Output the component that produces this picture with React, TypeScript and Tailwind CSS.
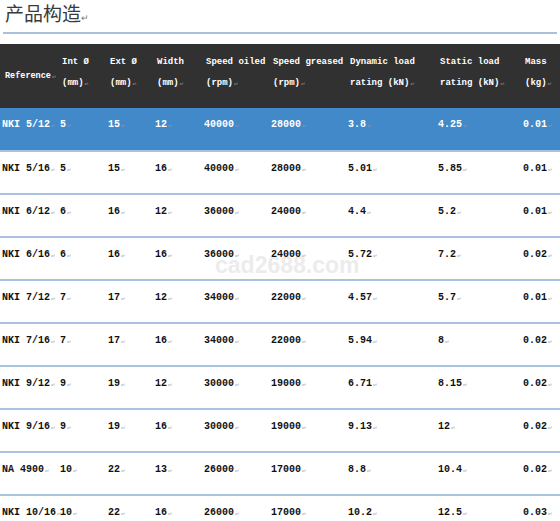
const cols = [
  "w-[58px]",
  "w-[48px]",
  "w-[47px]",
  "w-[49px]",
  "w-[67px]",
  "w-[77px]",
  "w-[90px]",
  "w-[85px]",
  "w-[60px]",
]

const header: [string, string][] = [
  ["", "Reference"],
  ["Int Ø", "(mm)"],
  ["Ext Ø", "(mm)"],
  ["Width", "(mm)"],
  ["Speed oiled", "(rpm)"],
  ["Speed greased", "(rpm)"],
  ["Dynamic load", "rating (kN)"],
  ["Static load", "rating (kN)"],
  ["Mass", "(kg)"],
]

const rows: string[][] = [
  ["NKI 5/12", "5", "15", "12", "40000", "28000", "3.8", "4.25", "0.01"],
  ["NKI 5/16", "5", "15", "16", "40000", "28000", "5.01", "5.85", "0.01"],
  ["NKI 6/12", "6", "16", "12", "36000", "24000", "4.4", "5.2", "0.01"],
  ["NKI 6/16", "6", "16", "16", "36000", "24000", "5.72", "7.2", "0.02"],
  ["NKI 7/12", "7", "17", "12", "34000", "22000", "4.57", "5.7", "0.01"],
  ["NKI 7/16", "7", "17", "16", "34000", "22000", "5.94", "8", "0.02"],
  ["NKI 9/12", "9", "19", "12", "30000", "19000", "6.71", "8.15", "0.02"],
  ["NKI 9/16", "9", "19", "16", "30000", "19000", "9.13", "12", "0.02"],
  ["NA 4900", "10", "22", "13", "26000", "17000", "8.8", "10.4", "0.02"],
  ["NKI 10/16", "10", "22", "16", "26000", "17000", "10.2", "12.5", "0.03"],
]

// little gray paragraph mark after each cell (copied from a Word doc)
const Mark = () => (
  <span className="ml-[1px] text-[6px] font-normal text-[#9a9a9a]">↵</span>
)

export default function App() {
  return (
    <div className="relative h-[521px] w-[560px] overflow-hidden bg-white">
      {/* watermark sits under the table */}
      <div className="pointer-events-none absolute left-[215px] top-[254px] font-['Liberation_Sans',sans-serif] text-[23px] font-bold leading-[22px] text-[#ececec]">
        cad2688.com
      </div>

      <div className="relative px-[5px] pt-[1px]">
        <h1 className="h-[24px] font-['Noto_Sans_CJK_SC',sans-serif] text-[19px] leading-[24px] text-[#3a3a3a]">
          产品构造<span className="text-[9px] text-[#777]">↵</span>
        </h1>
      </div>
      <div className="relative mx-[3px] mt-[7px] h-[2px] bg-[#a9bfdc]" />

      <table className="relative mt-[10px] w-[580px] table-fixed border-collapse font-['Liberation_Mono',monospace] font-bold">
        <thead>
          <tr className="h-[64px] bg-[#313131] text-[9px] text-white">
            {header.map(([a, b], i) => (
              <th key={i} className={`${cols[i]} p-0 pb-[6px] text-left align-middle font-bold`}>
                {a === "" ? (
                  <div className="pl-[5px] pt-[6px] text-[8.5px]">
                    {b}
                    <Mark />
                  </div>
                ) : (
                  <div className="whitespace-nowrap pl-[4px] leading-[21px]">
                    <div>{a}</div>
                    <div>
                      {b}
                      <Mark />
                    </div>
                  </div>
                )}
              </th>
            ))}
          </tr>
        </thead>
        <tbody>
          {rows.map((r, ri) => (
            <tr
              key={ri}
              className={
                ri === 0
                  ? "h-[43px] bg-[#4189c8] text-white"
                  : "h-[43px] border-t-2 border-[#a9c2e0] text-[#111]"
              }
            >
              {r.map((c, ci) => (
                <td
                  key={ci}
                  className={`${cols[ci]} whitespace-nowrap p-0 pl-[2px] pt-[10px] align-top text-[10px] leading-[14px]`}
                >
                  {c}
                  <Mark />
                </td>
              ))}
            </tr>
          ))}
        </tbody>
      </table>
    </div>
  )
}
